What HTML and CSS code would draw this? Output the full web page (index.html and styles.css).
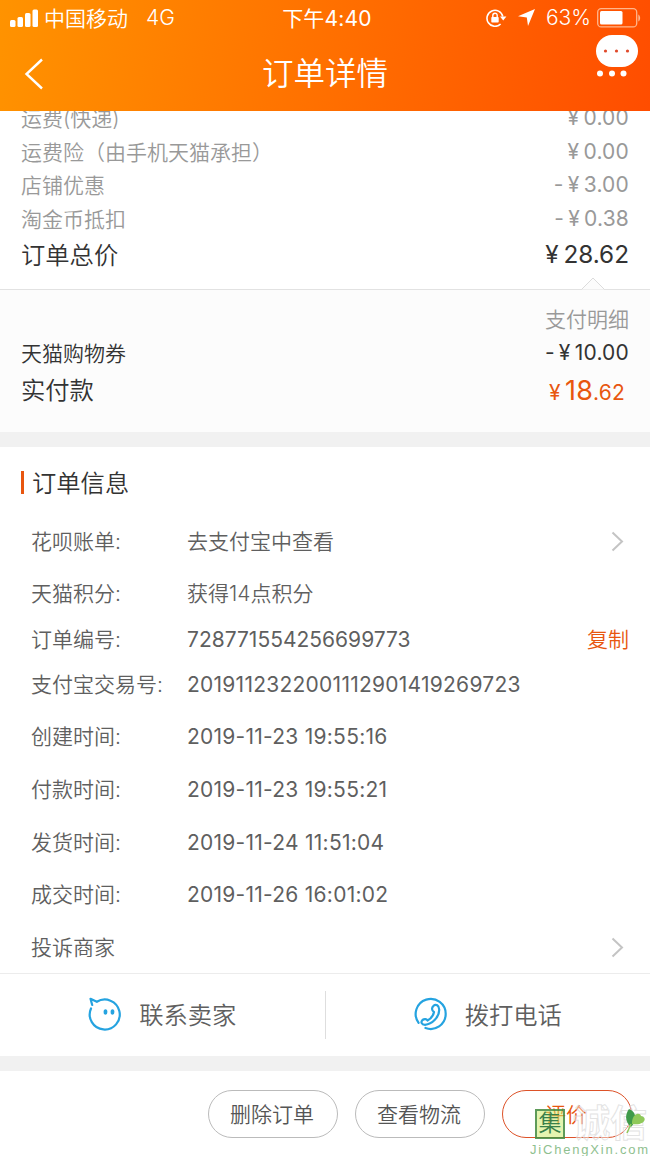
FILE: index.html
```html
<!DOCTYPE html>
<html lang="zh-CN">
<head>
  <meta charset="UTF-8" />
  <meta name="viewport" content="width=device-width, initial-scale=1.0" />
  <title>订单详情</title>
  <link rel="stylesheet" href="styles.css">
</head>
<body>
  <header class="header">
    <div class="status-bar">
      <div class="status-left">
        <svg class="signal" width="28" height="18" viewBox="0 0 28 18" fill="#fff">
          <rect x="0" y="11" width="5.5" height="7" rx="1.5" />
          <rect x="7.5" y="8" width="5.5" height="10" rx="1.5" />
          <rect x="15" y="4" width="5.5" height="14" rx="1.5" />
          <rect x="22.5" y="0.5" width="5.5" height="17.5" rx="1.5" />
        </svg>
        <span class="carrier">中国移动</span>
        <span class="network">4G</span>
      </div>
      <div class="clock">下午4:40</div>
      <div class="status-right">
        <svg class="lock" width="21" height="18" viewBox="0 0 21 18" fill="none" stroke="#fff" stroke-width="1.6">
          <path d="M16.8 7.5A8 8 0 1 0 14.6 15" />
          <path d="M14 7.6h6.4l-3.2 4z" fill="#fff" stroke="none" />
          <rect x="5.3" y="8" width="7.4" height="5.6" rx="0.8" fill="#fff" stroke="none" />
          <path d="M6.8 8.5V6.4a2.2 2.2 0 0 1 4.4 0v2.1" stroke-width="1.4" />
        </svg>
        <svg class="location" width="17" height="17" viewBox="0 0 17 17" fill="#fff">
          <path d="M17 0L10 17L8.8 8.4L0 7.2z" />
        </svg>
        <span class="percent">63%</span>
        <svg class="battery" width="44" height="20" viewBox="0 0 44 20">
          <rect x="0.7" y="0.7" width="39" height="18.2" rx="3.5" fill="none" stroke="#ffb68c" stroke-width="1.3" />
          <rect x="3" y="3" width="22.5" height="13.6" rx="1.5" fill="#fff" />
          <path d="M41.3 6.5c2.4 1 2.4 6 0 7z" fill="#ffb68c" />
        </svg>
      </div>
    </div>
    <div class="nav-bar">
      <svg class="back" width="20" height="32" viewBox="0 0 20 32" fill="none" stroke="#fff" stroke-width="2.4">
        <path d="M18 1.5L2.5 16L18 30.5" />
      </svg>
      <h1>订单详情</h1>
      <div class="more">
        <svg width="42" height="43" viewBox="0 0 42 43">
          <rect x="0" y="0" width="42" height="32" rx="16" fill="#fff" />
          <g fill="#e0492b">
            <circle cx="9.5" cy="16" r="1.6" />
            <circle cx="20.5" cy="16" r="1.6" />
            <circle cx="31.5" cy="16" r="1.6" />
          </g>
          <g fill="#fff">
            <circle cx="4" cy="38.5" r="3" />
            <circle cx="16" cy="38.5" r="3" />
            <circle cx="27.5" cy="38.5" r="3" />
          </g>
        </svg>
      </div>
    </div>
  </header>

  <section class="prices">
    <div class="price-row"><span class="cn">运费(快递)</span><span class="num">¥ 0.00</span></div>
    <div class="price-row"><span class="cn">运费险（由手机天猫承担）</span><span class="num">¥ 0.00</span></div>
    <div class="price-row"><span class="cn">店铺优惠</span><span class="num">- ¥ 3.00</span></div>
    <div class="price-row"><span class="cn">淘金币抵扣</span><span class="num">- ¥ 0.38</span></div>
    <div class="price-row total"><span class="cn">订单总价</span><span class="num">¥ 28.62</span></div>
  </section>

  <section class="payment">
    <svg class="notch" width="24" height="13" viewBox="0 0 24 13">
      <path d="M0.5 12.5L12 1L23.5 12.5" fill="#fcfcfc" stroke="#dcdcdc" />
    </svg>
    <div class="pay-detail">支付明细</div>
    <div class="pay-row"><span class="cn">天猫购物券</span><span class="num">- ¥ 10.00</span></div>
    <div class="pay-row paid">
      <span class="cn">实付款</span>
      <span class="num amount">¥ <b>18</b>.62</span>
    </div>
  </section>

  <section class="order-info">
    <h2>订单信息</h2>
    <div class="info-row">
      <span class="label cn">花呗账单:</span><span class="cn">去支付宝中查看</span>
      <svg class="arrow" width="13" height="21" viewBox="0 0 13 21"><path d="M1.5 1.5L11 10.5L1.5 19.5" /></svg>
    </div>
    <div class="info-row"><span class="label cn">天猫积分:</span><span class="cn">获得14点积分</span></div>
    <div class="info-row number">
      <span class="label cn">订单编号:</span><span class="value order-no">728771554256699773</span>
      <span class="copy cn">复制</span>
    </div>
    <div class="info-row alipay"><span class="label cn">支付宝交易号:</span><span class="value">2019112322001112901419269723</span></div>
    <div class="info-row low"><span class="label cn">创建时间:</span><span class="value">2019-11-23 19:55:16</span></div>
    <div class="info-row low"><span class="label cn">付款时间:</span><span class="value">2019-11-23 19:55:21</span></div>
    <div class="info-row low"><span class="label cn">发货时间:</span><span class="value">2019-11-24 11:51:04</span></div>
    <div class="info-row low"><span class="label cn">成交时间:</span><span class="value">2019-11-26 16:01:02</span></div>
    <div class="info-row low">
      <span class="label cn">投诉商家</span>
      <svg class="arrow" width="13" height="21" viewBox="0 0 13 21"><path d="M1.5 1.5L11 10.5L1.5 19.5" /></svg>
    </div>
  </section>

  <section class="contact">
    <div class="contact-item">
      <svg width="34" height="34" viewBox="0 0 34 34" fill="none" stroke="#25a3e0" stroke-width="2.2" stroke-linejoin="round" stroke-linecap="round">
        <path d="M3 11.5A15 15 0 1 0 8.8 4.8L2.5 1.8L4.2 8" />
        <ellipse cx="17.5" cy="15" rx="1.9" ry="2.8" fill="#25a3e0" stroke="none" />
        <ellipse cx="24.5" cy="15" rx="1.9" ry="2.8" fill="#25a3e0" stroke="none" />
      </svg>
      <span class="cn">联系卖家</span>
    </div>
    <div class="contact-item">
      <svg width="34" height="34" viewBox="0 0 34 34" fill="none" stroke="#25a3e0" stroke-width="2.2" stroke-linejoin="round" stroke-linecap="round">
        <path d="M4.6 25.8A15 15 0 1 1 11.5 31" />
        <path d="M19.5 8.8C22 6.5 25 8.5 25.2 12.5C25.5 20 18 27.5 11 27.8C7.5 27.8 6.5 25 8.5 23C10.5 21.5 12.5 22 13.5 23.5C17 21.5 19.5 18.5 20 15C17.5 13.5 17.5 10.5 19.5 8.8z" />
      </svg>
      <span class="cn">拨打电话</span>
    </div>
  </section>

  <footer class="actions">
    <button class="btn">删除订单</button>
    <button class="btn">查看物流</button>
    <button class="btn primary">评价</button>
  </footer>

  <div class="watermark">
    <div class="mark-top">
      <span class="seal">集</span>
      <span class="mark-name">诚信</span>
      <svg class="leaf" width="22" height="24" viewBox="0 0 22 24">
        <path d="M4 0C12 3 12 12 6 18C1 14-1 7 4 0z" fill="#3f9a4a" />
        <path d="M7 13C8 4 15 3 16 7C23 8 20 17 7 15z" fill="#8fc95a" />
        <path d="M6 15L2 24" stroke="#8fc95a" stroke-width="1.5" />
      </svg>
    </div>
    <div class="mark-url">JiChengXin.com</div>
  </div>
</body>
</html>
```
FILE: styles.css
```css
* {
  box-sizing: border-box;
}
body {
  margin: 0;
  width: 650px;
  height: 1156px;
  overflow: hidden;
  position: relative;
  background: #fff;
  font-family: Inter, "Noto Sans CJK SC", sans-serif;
  font-size: 21px;
  font-weight: 350;
  color: #5f5f5f;
}
h1, h2 {
  margin: 0;
  font-weight: 350;
}
/* chinese glyphs sit a bit low next to the digits */
.cn {
  padding-bottom: 3px;
}

/* header */
.header {
  position: relative;
  z-index: 1;
  height: 111px;
  background: linear-gradient(100deg, #ff9300, #ff4d00);
  color: #fff;
}
.status-bar {
  display: grid;
  grid-template-columns: 1fr auto 1fr;
  align-items: center;
  height: 35px;
  padding: 0 9px 0 10px;
}
.status-left, .status-right {
  display: flex;
  align-items: center;
}
.status-right {
  justify-content: flex-end;
}
.carrier {
  margin-left: 6px;
  padding-bottom: 1px;
}
.network {
  margin-left: 18px;
}
.clock {
  padding: 0 0 1px 3px;
  font-weight: 400;
  letter-spacing: 0.2px;
}
.lock {
  margin-left: 2px;
}
.location {
  margin-left: 11px;
}
.percent {
  margin: 0 6px 0 11px;
}
.nav-bar {
  display: grid;
  grid-template-columns: 60px 1fr 60px;
  align-items: center;
  height: 75px;
  padding: 0 12px 0 24px;
}
.nav-bar .back {
  margin-bottom: 1px;
}
.nav-bar h1 {
  padding: 0 12px 6px 0;
  text-align: center;
  font-size: 31.5px;
}
.more {
  display: flex;
  justify-content: flex-end;
  padding-bottom: 35px;
}

/* prices */
.prices {
  margin-top: -9px;
  padding: 0 21px 14px;
  height: 188px;
  border-bottom: 1px solid #e2e2e2;
  color: #999;
}
.price-row, .pay-row {
  display: flex;
  justify-content: space-between;
  align-items: center;
  height: 33.5px;
}
.num {
  padding-bottom: 2px;
  font-weight: 400;
  letter-spacing: 0.2px;
  word-spacing: -2px;
}
.price-row.total {
  height: 38px;
  font-size: 24.3px;
  color: #333;
}
.total .num {
  letter-spacing: 0;
}
.payment {
  position: relative;
  height: 142px;
  padding: 14px 21px 0;
  background: #fcfcfc;
  color: #333;
}
.notch {
  position: absolute;
  top: -13px;
  right: 45px;
}
.pay-detail {
  height: 33px;
  line-height: 32px;
  text-align: right;
  color: #999;
}
.pay-row.paid {
  height: 39px;
  font-size: 24.3px;
}
.amount {
  padding: 0 4px 0 0;
  font-size: 21px;
  color: #e8560f;
}
.amount b {
  font-size: 27px;
  font-weight: 400;
}

/* order info */
.order-info {
  border-top: 15px solid #f1f1f1;
  border-bottom: 1px solid #ececec;
  height: 542px;
  padding: 0 21px;
}
.order-info h2 {
  display: flex;
  align-items: center;
  height: 68px;
  font-size: 24.3px;
  color: #333;
}
.order-info h2::before {
  content: "";
  width: 3px;
  height: 23px;
  margin: 3px 8px 0 0;
  background: #e8560f;
}
.info-row {
  display: flex;
  align-items: center;
  height: 52.6px;
  padding-left: 10px;
}
.info-row.number {
  height: 38px;
}
.info-row.alipay {
  height: 52px;
}
.info-row.low {
  padding-top: 1px;
}
.label {
  width: 156px;
  white-space: nowrap;
}
.value {
  font-weight: 400;
  letter-spacing: 0.25px;
}
.order-no {
  letter-spacing: 0;
}
.arrow {
  margin-left: auto;
  margin-right: 5px;
  fill: none;
  stroke: #c4c4c4;
  stroke-width: 2;
}
.copy {
  margin-left: auto;
  color: #e8560f;
}

/* contact */
.contact {
  display: flex;
  align-items: center;
  height: 82px;
}
.contact-item {
  flex: 1;
  display: flex;
  align-items: center;
  justify-content: center;
  height: 48px;
  font-size: 24.3px;
}
.contact-item svg {
  margin: 0 17px 2px 0;
}
.contact-item + .contact-item {
  border-left: 1px solid #dedede;
}

/* bottom buttons */
.actions {
  display: flex;
  justify-content: flex-end;
  gap: 17px;
  height: 101px;
  padding: 19px 18px 0 0;
  border-top: 15px solid #f1f1f1;
}
.btn {
  width: 130px;
  height: 48px;
  padding: 0 2px 3px 0;
  border: 1px solid #bbb;
  border-radius: 24px;
  background: #fff;
  font: inherit;
  color: #555;
}
.btn.primary {
  border-color: #dd5228;
  color: #e8560f;
}

/* site mark over the corner */
.watermark {
  position: absolute;
  right: 0;
  bottom: 0;
  width: 120px;
  height: 50px;
}
.mark-top {
  display: flex;
  height: 35px;
  padding: 3px 0 0 5px;
}
.seal {
  width: 30px;
  height: 30px;
  border: 2px solid rgba(50, 125, 60, 0.75);
  background: rgba(205, 235, 110, 0.55);
  font-size: 23px;
  line-height: 24px;
  text-align: center;
  color: #39804a;
}
.mark-name {
  margin-left: 8px;
  font-size: 37px;
  line-height: 30px;
  white-space: nowrap;
  font-weight: 700;
  color: rgba(255, 255, 255, 0.45);
  -webkit-text-stroke: 1px rgba(215, 215, 215, 0.7);
}
.leaf {
  flex: none;
  margin-left: -22px;
}
.mark-url {
  font-family: "Liberation Sans", sans-serif;
  font-size: 13px;
  line-height: 17px;
  letter-spacing: 1.8px;
  font-weight: 400;
  color: #8fbf8f;
}
```
